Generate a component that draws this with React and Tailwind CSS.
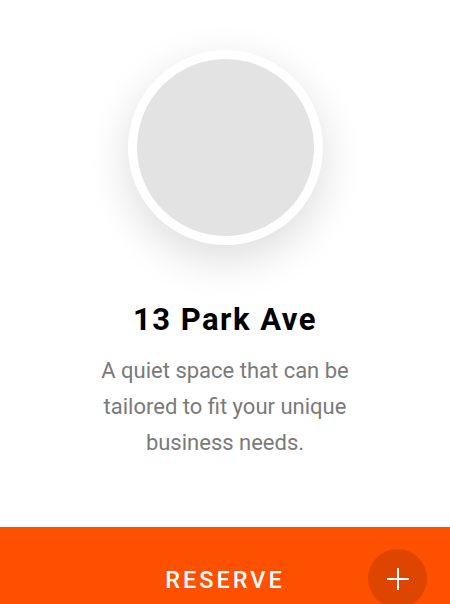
export default function App() {
    return (
        <div
            className="w-[450px] h-[604px] bg-white overflow-hidden flex flex-col"
            style={{ fontFamily: "Roboto, 'Liberation Sans', sans-serif" }}
        >
            {/* Avatar */}
            <div className="flex justify-center pt-[50px]">
                <div className="w-[195px] h-[195px] rounded-full bg-white p-[9px] shadow-[0_14px_44px_rgba(0,0,0,0.14)]">
                    <div className="w-full h-full rounded-full bg-[#e3e3e3]" />
                </div>
            </div>

            {/* Text */}
            <div className="flex flex-col items-center text-center mt-[54px]">
                <h1 className="text-[31px] leading-[42px] font-bold tracking-[1.5px] text-black">
                    13 Park Ave
                </h1>
                <p className="mt-[12px] w-[290px] text-[22px] leading-[36px] text-[#7a7a7a]">
                    A quiet space that can be tailored to fit your unique business needs.
                </p>
            </div>

            {/* Footer */}
            <div className="mt-auto h-[77px] bg-[#ff5000] flex items-start justify-center relative">
                <span className="mt-[39px] text-[23.5px] leading-[28px] font-medium tracking-[3px] text-white">
                    RESERVE
                </span>
                <button className="absolute left-[368px] top-[22px] w-[59px] h-[59px] rounded-full bg-[#de4500] flex items-center justify-center">
                    <svg width="24" height="24" viewBox="0 0 24 24" fill="none" stroke="white" strokeWidth="2">
                        <path d="M12 1v22M1 12h22" />
                    </svg>
                </button>
            </div>
        </div>
    );
}
